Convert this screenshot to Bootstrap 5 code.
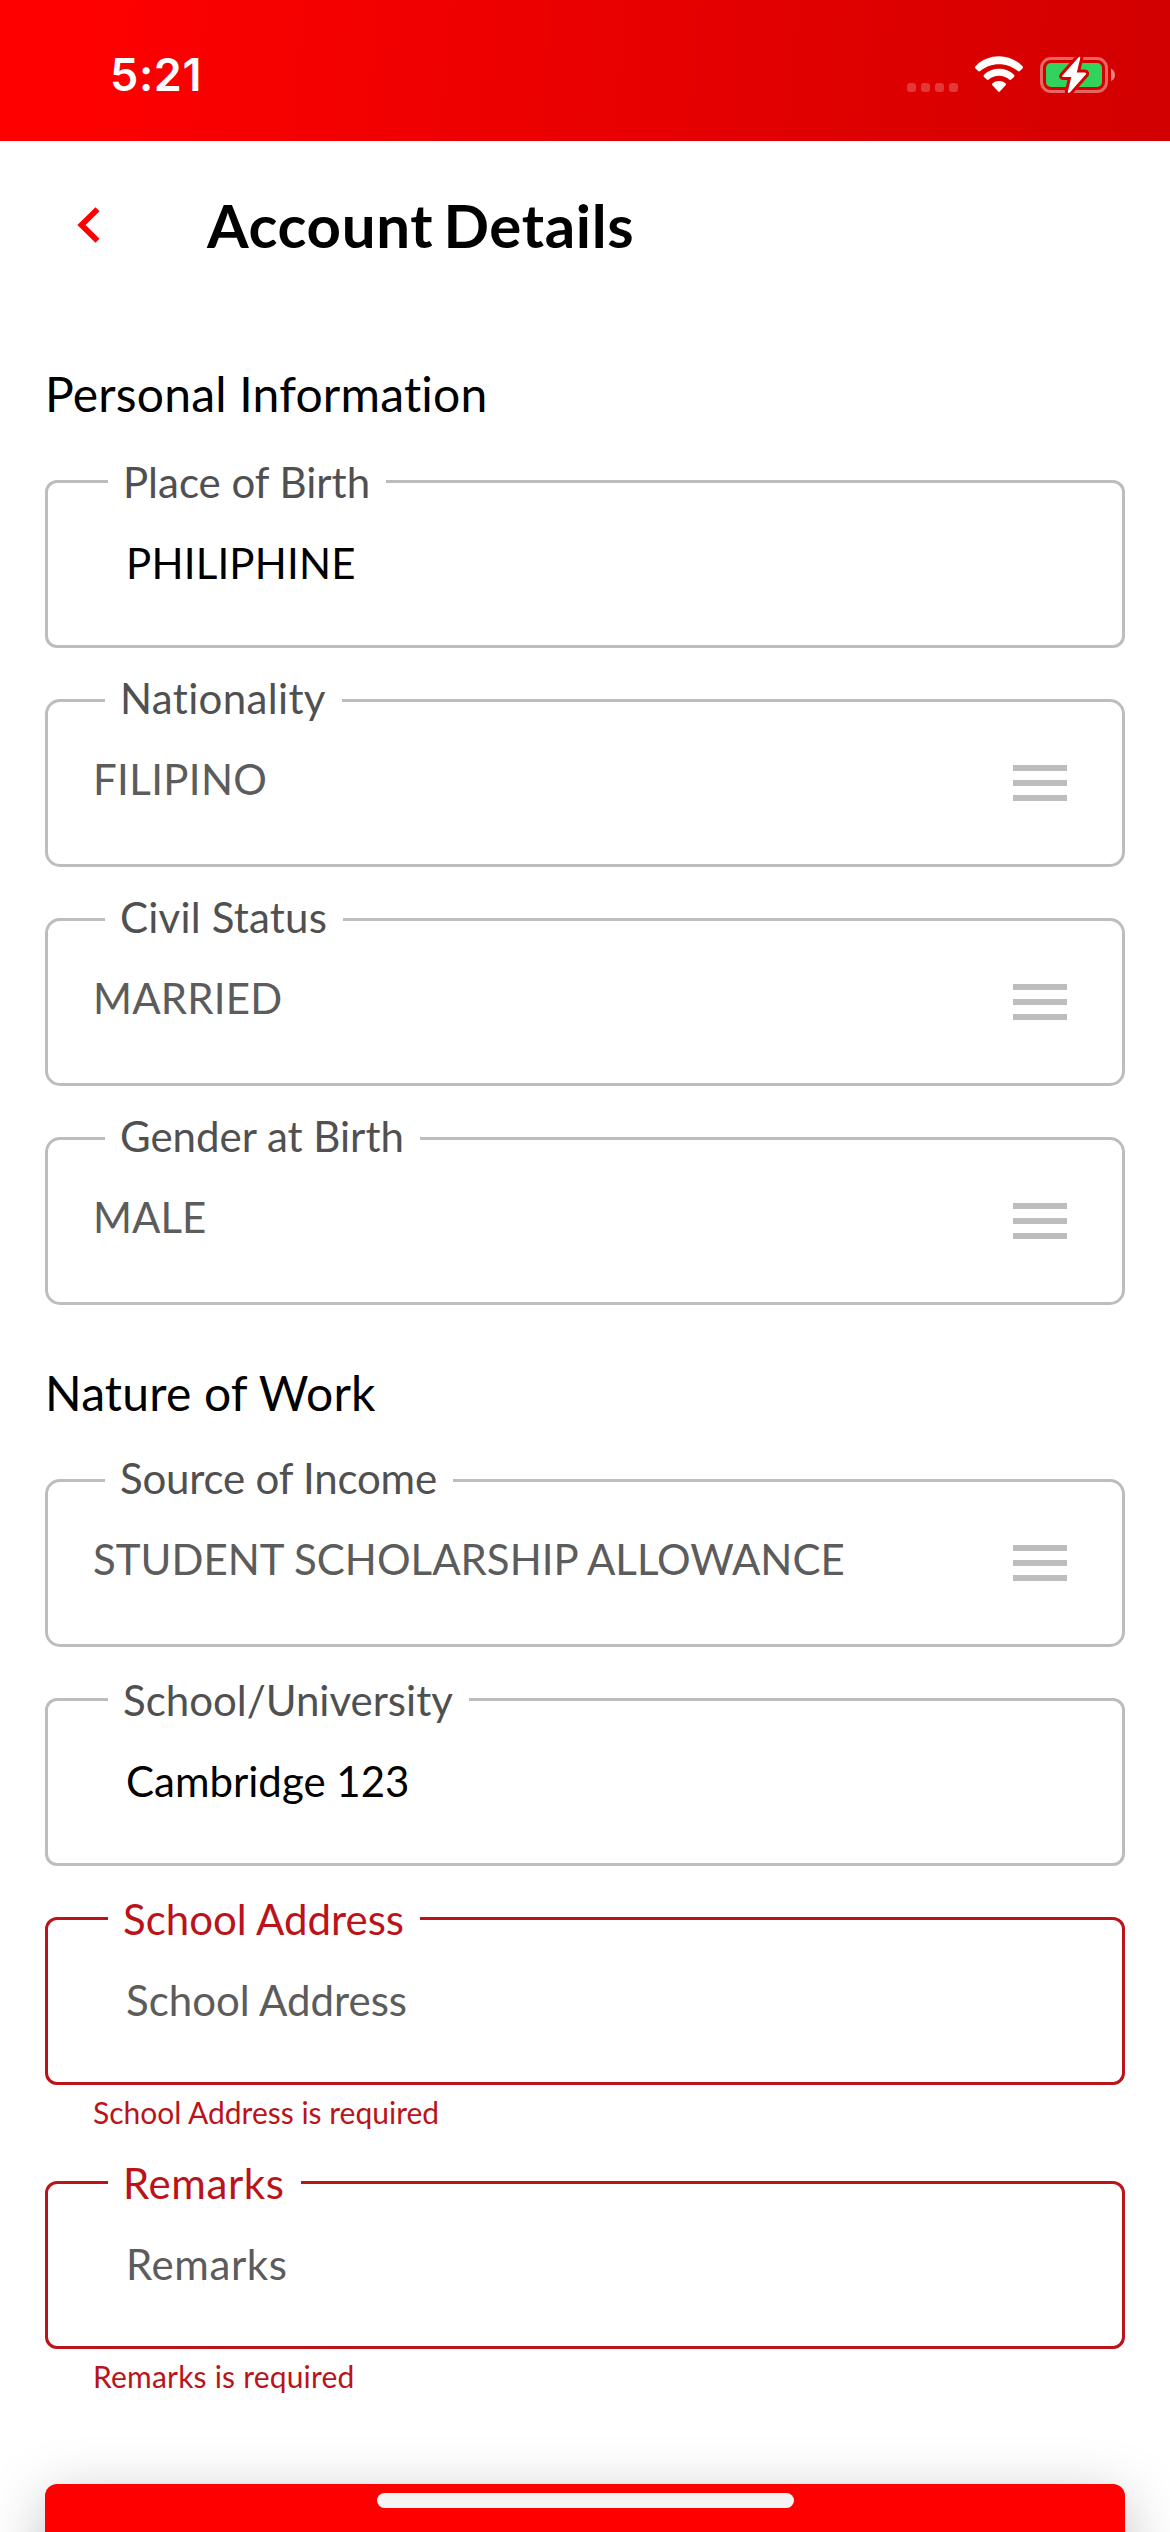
<!DOCTYPE html>
<html lang="en">
<head>
<meta charset="utf-8">
<meta name="viewport" content="width=device-width, initial-scale=1">
<title>Account Details</title>
<link href="https://cdn.jsdelivr.net/npm/bootstrap@5.3.0/dist/css/bootstrap.min.css" rel="stylesheet">
<style>
  body { font-family: Lato, sans-serif; color: #000; background: #fff; font-variant-ligatures: none; }
  .screen { width: 1170px; height: 2532px; }
  .statusbar { height: 141px; padding: 8px 54px 0 110px; background: linear-gradient(95deg, #f00 0%, #f00 6%, #d20000 100%); }
  .clock { font: 600 45px/54px Inter, sans-serif; color: #fff; letter-spacing: .6px; }
  .titlebar { height: 168px; padding-left: 77px; }
  .titlebar h1 { font-size: 60px; font-weight: 700; line-height: 72px; margin-left: 107px; letter-spacing: .65px; word-spacing: -5px; }
  .content { padding: 0 45px; }
  .section-title { font-size: 48px; font-weight: 400; line-height: 58px; letter-spacing: .2px; }
  .section-first { margin: 56px 0 57px; }
  .section-next { margin: 59px 0 57px; }
  .field { height: 168px; border: 3px solid #bdbdbd; border-radius: 12px; font-size: 42px; line-height: 50px; }
  .field + .field { margin-top: 51px; }
  .field-label { color: #505050; background: #fff; padding: 0 16px 0 15px; margin: -26px 0 0 60px; }
  .field-value { margin: 31px 0 0 78px; }
  .picker { border-radius: 15px; }
  .picker .field-label { margin: -29px 0 0 57px; }
  .picker .field-row { margin-top: 31px; padding: 0 55px 0 45px; color: #5c5c5c; }
  .picker svg { margin-top: 8px; }
  .invalid { border-color: #bb131a; }
  .invalid .field-label { color: #bb131a; }
  .hint { color: #5c5c5c; }
  .track-tight { letter-spacing: -.2px; }
  .track-1 { letter-spacing: .2px; }
  .track-2 { letter-spacing: .35px; }
  .track-3 { letter-spacing: .6px; }
  .error-text { font-size: 30px; line-height: 36px; color: #bb131a; margin: 9px 0 0 48px; }
  .error-text + .field { margin-top: 51px; }
  .submit { height: 150px; margin-top: 90px; border: 0; border-radius: 12px; background: #f00; box-shadow: 0 15px 60px rgba(0,0,0,.26); }
  .home-indicator { left: 377px; bottom: 24px; width: 417px; height: 15px; border-radius: 8px; background: #f4f4f4; }
</style>
</head>
<body>
<div class="screen position-relative overflow-hidden">
  <header class="statusbar d-flex align-items-center justify-content-between">
    <div class="clock">5:21</div>
    <svg width="210" height="40" viewBox="906 54 210 40">
      <g fill="#fff" fill-opacity=".22">
        <rect x="907" y="82" width="9" height="9" rx="3"/><rect x="921" y="82" width="9" height="9" rx="3"/>
        <rect x="935" y="82" width="9" height="9" rx="3"/><rect x="949" y="82" width="9" height="9" rx="3"/>
      </g>
      <g fill="#fff">
        <path d="M975.5 65.2C988.500 52 1009.500 52 1022.500 65.200Q1023.500 66.300 1022.500 67.400L1019.800 70.100Q1018.800 71 1017.800 70.100C1007.500 60.800 990.500 60.800 980.200 70.100Q979.200 71 978.200 70.100L975.500 67.400Q974.500 66.300 975.500 65.200Z"/>
        <path d="M984 73.700C992.300 65.900 1005.700 65.900 1014 73.700Q1015 74.800 1014 75.900L1011.200 78.500Q1010.200 79.400 1009.200 78.500C1003.300 73.600 994.700 73.600 988.800 78.500Q987.800 79.400 986.800 78.500L984 75.900Q983 74.800 984 73.700Z"/>
        <path d="M992.500 82.200C996.300 79.300 1001.700 79.300 1005.500 82.200Q1006.600 83.200 1005.600 84.300L1000 90.200Q999 91.300 998 90.200L992.400 84.300Q991.400 83.200 992.500 82.200Z"/>
      </g>
      <rect x="1041.500" y="57.500" width="65" height="33" rx="9.500" fill="none" stroke="#fff" stroke-opacity=".4" stroke-width="3"/>
      <rect x="1046" y="62" width="56" height="24" rx="5" fill="#32d35c"/>
      <path d="M1111 67.500Q1115 69.500 1115 74T1111 80Z" fill="#fff" fill-opacity=".5"/>
      <path d="M1078.400 56.500L1062.400 74.500Q1061.500 76 1063.200 76H1071.300L1067.800 90.500Q1068 92.800 1069.800 91.500L1085.800 73.500Q1086.700 71.500 1084.800 71.500H1076.800L1080.300 57Q1080 55 1078.400 56.500Z" fill="#fff" stroke="#d80000" stroke-width="6" stroke-linejoin="round" paint-order="stroke"/>
    </svg>
  </header>

  <nav class="titlebar d-flex align-items-center">
    <svg width="23" height="36" viewBox="0 0 23 36"><path d="M20.500 2.200L4.500 18L20.500 33.800" fill="none" stroke="#f00" stroke-width="5.800"/></svg>
    <h1 class="mb-0">Account Details</h1>
  </nav>

  <main class="content">
    <h2 class="section-title section-first">Personal Information</h2>

    <div class="field d-flex flex-column align-items-start">
      <label class="field-label">Place of Birth</label>
      <div class="field-value track-1">PHILIPHINE</div>
    </div>
    <div class="field picker d-flex flex-column align-items-start">
      <label class="field-label track-2">Nationality</label>
      <div class="field-row w-100 d-flex justify-content-between align-items-center">
        <span class="track-2">FILIPINO</span>
        <svg width="54" height="36" viewBox="0 0 54 36" fill="#bdbdbd"><path d="M0 0H54V6H0ZM0 15H54V21H0ZM0 30H54V36H0Z"/></svg>
      </div>
    </div>
    <div class="field picker d-flex flex-column align-items-start">
      <label class="field-label track-1">Civil Status</label>
      <div class="field-row w-100 d-flex justify-content-between align-items-center">
        <span class="track-1">MARRIED</span>
        <svg width="54" height="36" viewBox="0 0 54 36" fill="#bdbdbd"><path d="M0 0H54V6H0ZM0 15H54V21H0ZM0 30H54V36H0Z"/></svg>
      </div>
    </div>
    <div class="field picker d-flex flex-column align-items-start">
      <label class="field-label">Gender at Birth</label>
      <div class="field-row w-100 d-flex justify-content-between align-items-center">
        <span>MALE</span>
        <svg width="54" height="36" viewBox="0 0 54 36" fill="#bdbdbd"><path d="M0 0H54V6H0ZM0 15H54V21H0ZM0 30H54V36H0Z"/></svg>
      </div>
    </div>

    <h2 class="section-title section-next">Nature of Work</h2>

    <div class="field picker d-flex flex-column align-items-start">
      <label class="field-label track-tight">Source of Income</label>
      <div class="field-row w-100 d-flex justify-content-between align-items-center">
        <span>STUDENT SCHOLARSHIP ALLOWANCE</span>
        <svg width="54" height="36" viewBox="0 0 54 36" fill="#bdbdbd"><path d="M0 0H54V6H0ZM0 15H54V21H0ZM0 30H54V36H0Z"/></svg>
      </div>
    </div>
    <div class="field d-flex flex-column align-items-start">
      <label class="field-label">School/University</label>
      <div class="field-value">Cambridge 123</div>
    </div>
    <div class="field invalid d-flex flex-column align-items-start">
      <label class="field-label">School Address</label>
      <div class="field-value hint">School Address</div>
    </div>
    <div class="error-text">School Address is required</div>
    <div class="field invalid d-flex flex-column align-items-start">
      <label class="field-label track-3">Remarks</label>
      <div class="field-value hint track-3">Remarks</div>
    </div>
    <div class="error-text track-1">Remarks is required</div>

    <button type="button" class="submit d-block w-100" aria-label="Submit"></button>
  </main>

  <div class="home-indicator position-absolute"></div>
</div>
<script src="https://cdn.jsdelivr.net/npm/bootstrap@5.3.0/dist/js/bootstrap.bundle.min.js"></script>
</body>
</html>
